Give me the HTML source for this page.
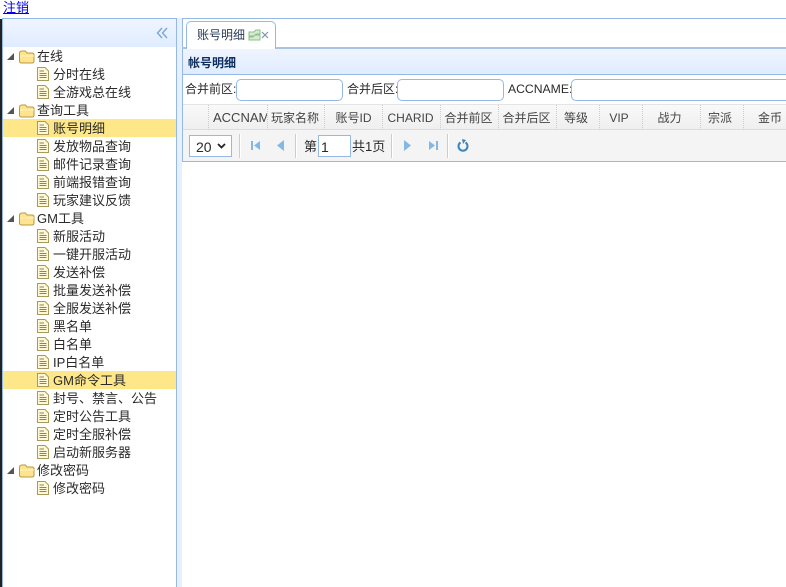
<!DOCTYPE html>
<html><head><meta charset="utf-8">
<style>
html,body{margin:0;padding:0;width:786px;height:587px;overflow:hidden;background:#fff;}
body{font-family:"Liberation Sans","Noto Sans CJK SC",sans-serif;font-size:13px;color:#2a2a2a;position:relative;}
div,span,a,input,select{position:absolute;box-sizing:border-box;}
.t{white-space:nowrap;line-height:18px;height:18px;font-size:13px;color:#2a2a2a;margin-top:1px;}
.hl{left:3px;width:173px;height:18px;background:#fde788;}
svg{position:absolute;overflow:visible;}
.h{top:109px;height:18px;line-height:18px;white-space:nowrap;color:#444;font-size:12px;text-align:center;}
.sep{top:105px;height:25px;width:1px;border-left:1px dotted #ccc;}
.ps{top:134px;height:24px;background:#ccc;border-right:1px solid #fff;width:2px;}
.inp{background:#fff;border:1px solid #95b8e7;border-radius:5px;height:22px;top:79px;}
.lb{top:80px;line-height:18px;height:18px;white-space:nowrap;color:#2a2a2a;font-size:12px;}
</style></head><body>
<a href="#" style="left:3px;top:0;line-height:16px;color:#0000ee;font-size:13px;text-decoration:underline;white-space:nowrap;">注销</a>
<div style="left:0;top:19px;width:2px;height:568px;background:#222;"></div>

<!-- left panel -->
<div style="left:2px;top:18px;width:175px;height:580px;border:1px solid #95b8e7;background:#fff;"></div>
<div style="left:3px;top:19px;width:173px;height:28px;background:linear-gradient(#eff5ff,#e0ecff);"></div>
<svg style="left:156px;top:27px" width="14" height="12" viewBox="0 0 14 12"><path d="M6 1 1.500 6 6 11M11 1 6.500 6 11 11" fill="none" stroke="#7aa6d8" stroke-width="1.400"/></svg>
<div style="left:177px;top:18px;width:5px;height:569px;background:#e6f0ff;"></div>

<div class="hl" style="top:119px"></div>
<div class="hl" style="top:371px"></div>

<svg width="0" height="0" style="left:0;top:0"><defs>
<g id="f"><path d="M0.500 3.500Q0.500 1 3 1H6.500L8 3H13Q15 3 15 5V11Q15 13 13 13H3Q0.500 13 .5 11Z" fill="#ffe38f" stroke="#b89a3c"/><path d="M1 6H15" stroke="#fff3c4"/></g>
<g id="d"><path d="M.5 .5H8L11.500 4V13.500H.5Z" fill="#fff8d6" stroke="#a89a5c"/><path d="M2.500 4H7M2.500 6.500H9.500M2.500 8.500H9.500M2.500 10.500H9.500" stroke="#8f8558"/></g>
<g id="a"><path d="M7 0V7H0Z" fill="#555"/></g>
</defs></svg>

<!-- tree -->
<svg style="left:7px;top:53px" width="7" height="7"><use href="#a"/></svg><svg style="left:19px;top:50px" width="16" height="14"><use href="#f"/></svg><span class="t" style="left:37px;top:47px">在线</span>
<svg style="left:37px;top:67px" width="12" height="14"><use href="#d"/></svg><span class="t" style="left:53px;top:65px">分时在线</span>
<svg style="left:37px;top:85px" width="12" height="14"><use href="#d"/></svg><span class="t" style="left:53px;top:83px">全游戏总在线</span>
<svg style="left:7px;top:107px" width="7" height="7"><use href="#a"/></svg><svg style="left:19px;top:104px" width="16" height="14"><use href="#f"/></svg><span class="t" style="left:37px;top:101px">查询工具</span>
<svg style="left:37px;top:121px" width="12" height="14"><use href="#d"/></svg><span class="t" style="left:53px;top:119px">账号明细</span>
<svg style="left:37px;top:139px" width="12" height="14"><use href="#d"/></svg><span class="t" style="left:53px;top:137px">发放物品查询</span>
<svg style="left:37px;top:157px" width="12" height="14"><use href="#d"/></svg><span class="t" style="left:53px;top:155px">邮件记录查询</span>
<svg style="left:37px;top:175px" width="12" height="14"><use href="#d"/></svg><span class="t" style="left:53px;top:173px">前端报错查询</span>
<svg style="left:37px;top:193px" width="12" height="14"><use href="#d"/></svg><span class="t" style="left:53px;top:191px">玩家建议反馈</span>
<svg style="left:7px;top:215px" width="7" height="7"><use href="#a"/></svg><svg style="left:19px;top:212px" width="16" height="14"><use href="#f"/></svg><span class="t" style="left:37px;top:209px">GM工具</span>
<svg style="left:37px;top:229px" width="12" height="14"><use href="#d"/></svg><span class="t" style="left:53px;top:227px">新服活动</span>
<svg style="left:37px;top:247px" width="12" height="14"><use href="#d"/></svg><span class="t" style="left:53px;top:245px">一键开服活动</span>
<svg style="left:37px;top:265px" width="12" height="14"><use href="#d"/></svg><span class="t" style="left:53px;top:263px">发送补偿</span>
<svg style="left:37px;top:283px" width="12" height="14"><use href="#d"/></svg><span class="t" style="left:53px;top:281px">批量发送补偿</span>
<svg style="left:37px;top:301px" width="12" height="14"><use href="#d"/></svg><span class="t" style="left:53px;top:299px">全服发送补偿</span>
<svg style="left:37px;top:319px" width="12" height="14"><use href="#d"/></svg><span class="t" style="left:53px;top:317px">黑名单</span>
<svg style="left:37px;top:337px" width="12" height="14"><use href="#d"/></svg><span class="t" style="left:53px;top:335px">白名单</span>
<svg style="left:37px;top:355px" width="12" height="14"><use href="#d"/></svg><span class="t" style="left:53px;top:353px">IP白名单</span>
<svg style="left:37px;top:373px" width="12" height="14"><use href="#d"/></svg><span class="t" style="left:53px;top:371px">GM命令工具</span>
<svg style="left:37px;top:391px" width="12" height="14"><use href="#d"/></svg><span class="t" style="left:53px;top:389px">封号、禁言、公告</span>
<svg style="left:37px;top:409px" width="12" height="14"><use href="#d"/></svg><span class="t" style="left:53px;top:407px">定时公告工具</span>
<svg style="left:37px;top:427px" width="12" height="14"><use href="#d"/></svg><span class="t" style="left:53px;top:425px">定时全服补偿</span>
<svg style="left:37px;top:445px" width="12" height="14"><use href="#d"/></svg><span class="t" style="left:53px;top:443px">启动新服务器</span>
<svg style="left:7px;top:467px" width="7" height="7"><use href="#a"/></svg><svg style="left:19px;top:464px" width="16" height="14"><use href="#f"/></svg><span class="t" style="left:37px;top:461px">修改密码</span>
<svg style="left:37px;top:481px" width="12" height="14"><use href="#d"/></svg><span class="t" style="left:53px;top:479px">修改密码</span>

<!-- right area -->
<div style="left:182px;top:18px;width:604px;height:1px;background:#95b8e7;"></div>
<div style="left:182px;top:18px;width:1px;height:144px;background:#95b8e7;"></div>
<div style="left:182px;top:47px;width:604px;height:2px;background:#a9c3e6;"></div>
<div style="left:186px;top:21px;width:90px;height:28px;background:#fff;border:1px solid #95b8e7;border-bottom:0;border-radius:5px 5px 0 0;"></div>
<span class="t" style="left:197px;top:25px;color:#2a3b55;font-size:12px;">账号明细</span>
<svg style="left:248px;top:29px" width="13" height="12" viewBox="0 0 13 12"><path d="M1 3H6L8 1H12V5H8L6 7H1ZM1 8H5L7 6H12V11H1Z" fill="#d5ecd0" stroke="#8dc08a" stroke-width="1"/></svg>
<svg style="left:261px;top:31px" width="8" height="8" viewBox="0 0 8 8"><path d="M1 1 7 7M7 1 1 7" stroke="#7d93ad" stroke-width="1.200"/></svg>

<div style="left:182px;top:49px;width:604px;height:113px;border-left:1px solid #95b8e7;border-bottom:1px solid #95b8e7;"></div>
<div style="left:183px;top:49px;width:603px;height:26px;background:linear-gradient(#eff5ff,#e0ecff);border-bottom:1px solid #95b8e7;"></div>
<span class="t" style="left:188px;top:53px;font-weight:bold;font-size:12px;color:#0e2d5f;">帐号明细</span>

<span class="lb" style="left:185px">合并前区:</span>
<div class="inp" style="left:236px;width:107px"></div>
<span class="lb" style="left:347px">合并后区:</span>
<div class="inp" style="left:397px;width:107px"></div>
<span class="lb" style="left:508px;font-size:12.200px;">ACCNAME:</span>
<div class="inp" style="left:571px;width:230px"></div>

<!-- grid header -->
<div style="left:183px;top:104px;width:603px;height:26px;background:linear-gradient(#f9f9f9,#efefef);border-top:1px solid #e4e4e4;border-bottom:1px solid #ddd;"></div>
<div class="sep" style="left:208px"></div>
<div class="sep" style="left:267px"></div>
<div class="sep" style="left:324px"></div>
<div class="sep" style="left:382px"></div>
<div class="sep" style="left:440px"></div>
<div class="sep" style="left:498px"></div>
<div class="sep" style="left:556px"></div>
<div class="sep" style="left:599px"></div>
<div class="sep" style="left:642px"></div>
<div class="sep" style="left:700px"></div>
<div class="sep" style="left:743px"></div>
<span class="h" style="left:209px;width:58px;overflow:hidden;text-align:left;padding-left:4px;font-size:13px;">ACCNAME</span>
<span class="h" style="left:267px;width:56px">玩家名称</span>
<span class="h" style="left:325px;width:57px">账号ID</span>
<span class="h" style="left:382px;width:57px">CHARID</span>
<span class="h" style="left:440px;width:57px">合并前区</span>
<span class="h" style="left:498px;width:57px">合并后区</span>
<span class="h" style="left:555px;width:42px">等级</span>
<span class="h" style="left:598px;width:42px">VIP</span>
<span class="h" style="left:641px;width:57px">战力</span>
<span class="h" style="left:699px;width:42px">宗派</span>
<span class="h" style="left:743px;width:54px">金币</span>

<!-- pager -->
<div style="left:183px;top:130px;width:603px;height:31px;background:#f4f4f4;"></div>
<div style="left:189px;top:135px;width:43px;height:22px;background:#fff;border:1px solid #95b8e7;"></div>
<span class="t" style="left:196px;top:137px;font-size:14px;">20</span>
<svg style="left:217px;top:143px" width="9" height="6" viewBox="0 0 9 6"><path d="M1 1 4.500 4.500 8 1" fill="none" stroke="#222" stroke-width="1.800"/></svg>
<div class="ps" style="left:239px"></div>
<svg style="left:250px;top:140px" width="11" height="11" viewBox="0 0 11 11"><path d="M1 1H3V10H1ZM10 1V10L4 5.500Z" fill="#84b8e2"/></svg>
<svg style="left:276px;top:140px" width="9" height="11" viewBox="0 0 9 11"><path d="M8 0V11L1 5.500Z" fill="#84b8e2"/></svg>
<div class="ps" style="left:295px"></div>
<span class="t" style="left:304px;top:137px">第</span>
<div style="left:318px;top:135px;width:33px;height:22px;background:#fff;border:1px solid #95b8e7;"></div>
<span class="t" style="left:321px;top:137px;font-size:14px;">1</span>
<span class="t" style="left:352px;top:137px">共1页</span>
<div class="ps" style="left:391px"></div>
<svg style="left:403px;top:140px" width="9" height="11" viewBox="0 0 9 11"><path d="M1 0V11L8 5.500Z" fill="#84b8e2"/></svg>
<svg style="left:428px;top:140px" width="11" height="11" viewBox="0 0 11 11"><path d="M1 1V10L7 5.500ZM8 1H10V10H8Z" fill="#84b8e2"/></svg>
<div class="ps" style="left:447px"></div>
<svg style="left:457px;top:139px" width="12" height="13" viewBox="0 0 12 13"><path d="M3.500 3.500A4.500 4.500 0 1 0 8.500 3.500" fill="none" stroke="#3d84bd" stroke-width="2"/><path d="M5 0 9 1 6 5Z" fill="#3d84bd"/></svg>
</body></html>
